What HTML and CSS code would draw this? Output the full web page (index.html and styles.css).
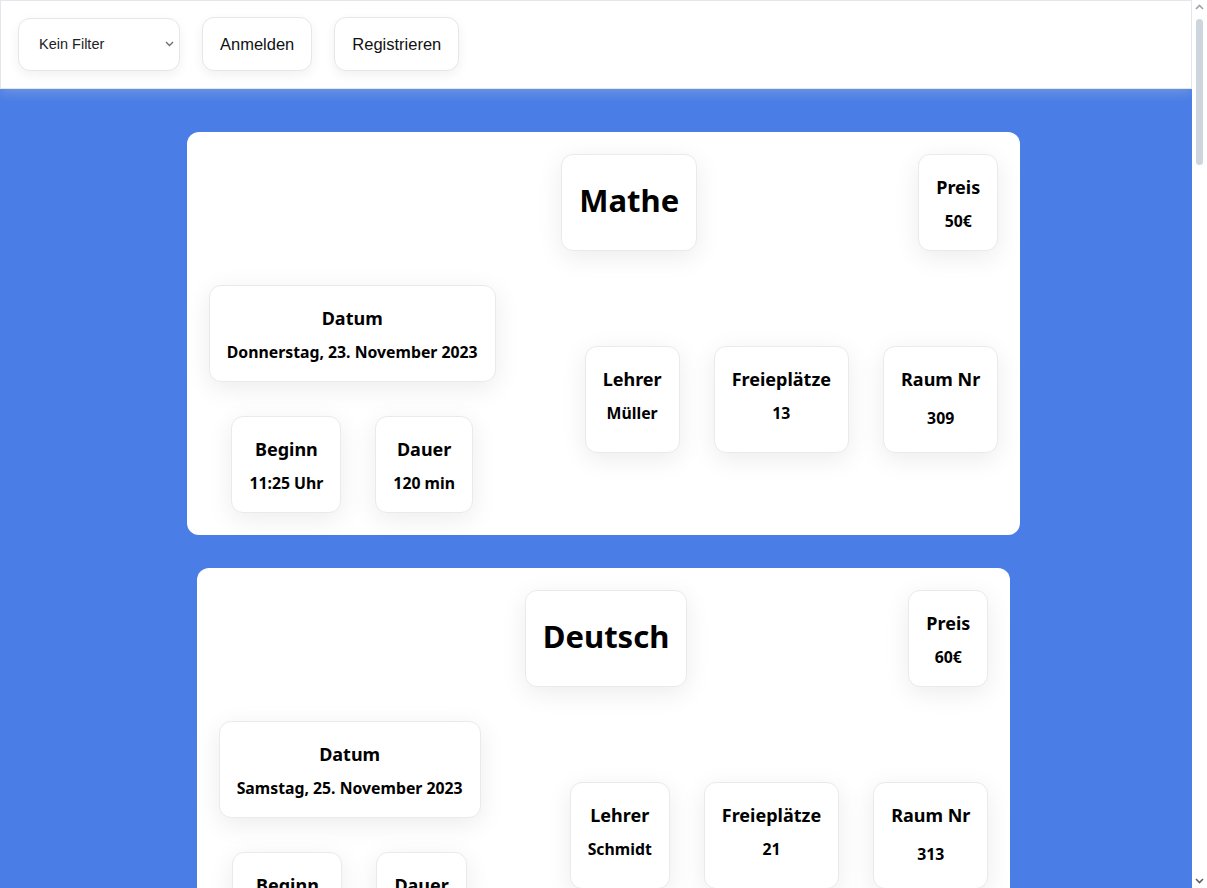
FILE: index.html
```html
<!DOCTYPE html>
<html lang="de">
<head>
<meta charset="utf-8">
<title>Kurse</title>
<link rel="stylesheet" href="styles.css">
</head>
<body>
<header class="topbar">
  <span class="filter-wrap">
    <select class="filter">
      <option>Kein Filter</option>
      <option>Mathe</option>
      <option>Deutsch</option>
    </select>
    <svg class="filter-arrow" width="9" height="6" viewBox="0 0 9 6" aria-hidden="true"><path d="M1 1l3.5 3.5L8 1" fill="none" stroke="#6b6b6b" stroke-width="1.3"/></svg>
  </span>
  <button class="btn">Anmelden</button>
  <button class="btn">Registrieren</button>
</header>
<main class="courses">
  <article class="course">
    <div class="course-head">
      <div class="tile title-tile"><h1>Mathe</h1></div>
      <div class="tile"><h3>Preis</h3><p>50€</p></div>
    </div>
    <div class="course-body">
      <div class="col-left">
        <div class="tile"><h3>Datum</h3><p>Donnerstag, 23. November 2023</p></div>
        <div class="time-row">
          <div class="tile"><h3>Beginn</h3><p>11:25 Uhr</p></div>
          <div class="tile"><h3>Dauer</h3><p>120 min</p></div>
        </div>
      </div>
      <div class="col-right">
        <div class="tile tall"><h3>Lehrer</h3><p>Müller</p></div>
        <div class="tile tall"><h3>Freieplätze</h3><p>13</p></div>
        <div class="tile tall"><h3>Raum Nr</h3><p class="room">309</p></div>
      </div>
    </div>
  </article>
  <article class="course">
    <div class="course-head">
      <div class="tile title-tile"><h1>Deutsch</h1></div>
      <div class="tile"><h3>Preis</h3><p>60€</p></div>
    </div>
    <div class="course-body">
      <div class="col-left">
        <div class="tile"><h3>Datum</h3><p>Samstag, 25. November 2023</p></div>
        <div class="time-row">
          <div class="tile"><h3>Beginn</h3><p>09:00 Uhr</p></div>
          <div class="tile"><h3>Dauer</h3><p>90 min</p></div>
        </div>
      </div>
      <div class="col-right">
        <div class="tile tall"><h3>Lehrer</h3><p>Schmidt</p></div>
        <div class="tile tall"><h3>Freieplätze</h3><p>21</p></div>
        <div class="tile tall"><h3>Raum Nr</h3><p class="room">313</p></div>
      </div>
    </div>
  </article>
</main>
<div class="scrollbar" aria-hidden="true">
  <svg class="sb-arrow" width="9" height="6" viewBox="0 0 9 6"><path d="M1 5l3.5-3.5L8 5" fill="none" stroke="#a3a3a3" stroke-width="1.6"/></svg>
  <div class="sb-thumb"></div>
  <svg class="sb-arrow sb-down" width="9" height="6" viewBox="0 0 9 6"><path d="M1 1l3.5 3.5L8 1" fill="none" stroke="#5f5f5f" stroke-width="1.6"/></svg>
</div>
</body>
</html>
```
FILE: styles.css
```css
html, body {
  margin: 0;
  padding: 0;
}
body {
  margin-right: 15px;
  font-family: "Noto Sans", "Open Sans", sans-serif;
  color: #000;
  background: #4a7de6;
}
.topbar {
  position: relative;
  z-index: 1;
  display: flex;
  align-items: center;
  gap: 22px;
  padding: 16px 17px 17px;
  background: #fff;
  border: 1px solid #e3e6ea;
  box-shadow: 0 3px 12px rgba(200, 205, 215, 0.35);
}
.filter-wrap {
  position: relative;
  display: inline-flex;
}
.filter {
  appearance: none;
  -webkit-appearance: none;
  width: 162px;
  height: 53px;
  padding: 0 24px 0 20px;
  font-family: "Liberation Sans", Arial, sans-serif;
  font-size: 14.5px;
  color: #222;
  background: #fff;
  border: 1px solid #e5e7eb;
  border-radius: 12px;
  box-shadow: 0 4px 12px rgba(0, 0, 0, 0.06);
}
.filter-arrow {
  position: absolute;
  right: 6px;
  top: 23px;
  pointer-events: none;
}
.btn {
  height: 54px;
  padding: 0 17px;
  font-family: "Liberation Sans", Arial, sans-serif;
  font-size: 16.5px;
  color: #111;
  background: #fff;
  border: 1px solid #e5e7eb;
  border-radius: 12px;
  box-shadow: 0 4px 12px rgba(0, 0, 0, 0.06);
}
.courses {
  display: flex;
  flex-direction: column;
  align-items: center;
  gap: 33px;
  padding: 43px 0 43px 15px;
  min-height: 4900px;
  box-sizing: border-box;
}
.course {
  display: flex;
  flex-direction: column;
  gap: 34px;
  padding: 22px;
  background: #fff;
  border-radius: 12px;
}
.course-head {
  display: flex;
  justify-content: flex-end;
  gap: 221px;
}
.course-body {
  display: flex;
  align-items: center;
  gap: 89px;
}
.col-left {
  display: flex;
  flex-direction: column;
  align-items: center;
  gap: 34px;
}
.time-row,
.col-right {
  display: flex;
  gap: 34px;
}
.tile {
  padding: 20px 17px 18px;
  text-align: center;
  background: #fff;
  border: 1px solid #e8eaee;
  border-radius: 12px;
  box-shadow: 0 6px 26px rgba(0, 0, 0, 0.08);
}
.tile h3 {
  margin: 0;
  font-size: 18px;
  line-height: 24px;
  font-weight: 700;
}
.tile p {
  margin: 12px 0 0;
  font-size: 15.8px;
  line-height: 21px;
  font-weight: 700;
}
.tile.tall {
  padding-bottom: 28px;
}
.tile p.room {
  margin-top: 17px;
  margin-bottom: -5px;
}
.title-tile {
  padding: 24px 17px 28px;
}
.title-tile h1 {
  margin: 0;
  font-size: 31px;
  line-height: 43px;
  font-weight: 700;
}
.scrollbar {
  position: fixed;
  top: 0;
  right: 0;
  bottom: 0;
  z-index: 2;
  width: 15px;
  display: flex;
  flex-direction: column;
  align-items: center;
  padding: 4px 0;
  box-sizing: border-box;
  background: #fff;
}
.sb-arrow {
  flex: none;
}
.sb-thumb {
  width: 7px;
  height: 146px;
  margin-top: 9px;
  border-radius: 4px;
  background: #cdd5de;
}
.sb-down {
  margin-top: auto;
}
```
